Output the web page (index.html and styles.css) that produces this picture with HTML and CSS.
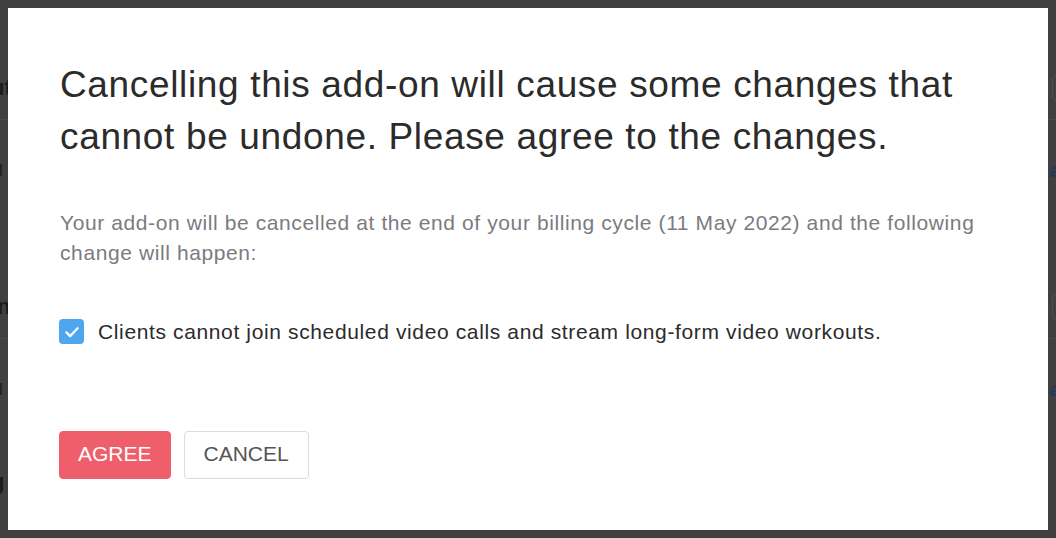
FILE: index.html
```html
<!DOCTYPE html>
<html lang="en">

<head>
  <meta charset="UTF-8">
  <meta name="viewport" content="width=device-width, initial-scale=1.0">
  <title>Cancel add-on</title>
  <link rel="stylesheet" href="styles.css">
</head>

<body>
  <!-- Page behind the modal (only the edges show) -->
  <div class="page">
    <div class="section section-top">
      <div class="section-head">
        <span class="title">ut</span>
        <span class="btn-ghost"></span>
      </div>
    </div>
    <div class="section">
      <div class="section-row">
        <span class="label">l</span>
        <span class="link">a</span>
      </div>
      <div class="section-head">
        <span class="title">in</span>
        <span class="btn-ghost"></span>
      </div>
    </div>
    <div class="section section-last">
      <div class="section-row">
        <span class="label">l</span>
        <span class="link">a</span>
      </div>
      <div class="section-head">
        <span class="title">g</span>
      </div>
    </div>
  </div>

  <!-- Modal -->
  <div class="modal">
    <h1 class="modal-title">Cancelling this add-on will cause some changes that cannot be undone. Please agree to the changes.</h1>
    <p class="modal-text">Your add-on will be cancelled at the end of your billing cycle (11 May 2022) and the following change will happen:</p>

    <label class="check">
      <span class="check-box">
        <svg viewBox="0 0 24 24" width="18" height="18">
          <path d="M4.5 12.5l5 5L19.5 7" fill="none" stroke="#fff" stroke-width="3" stroke-linecap="round" stroke-linejoin="round" />
        </svg>
      </span>
      <span class="check-label">Clients cannot join scheduled video calls and stream long-form video workouts.</span>
    </label>

    <div class="actions">
      <button class="btn btn-agree">AGREE</button>
      <button class="btn btn-cancel">CANCEL</button>
    </div>
  </div>
</body>

</html>
```

FILE: styles.css
```css
body {
  margin: 0;
  height: 538px;
  overflow: hidden;
  background: #404040;
  font-family: 'Liberation Sans', Arial, sans-serif;
}

.page {
  display: flex;
  flex-direction: column;
}

.section {
  display: flex;
  flex-direction: column;
  height: 219px;
  border-bottom: 1px solid #4b4b4b;
  box-sizing: border-box;
}

.section-top {
  height: 120px;
  justify-content: flex-end;
}

.section-last {
  border-bottom: 0;
}

.section-head {
  display: flex;
  justify-content: space-between;
  align-items: center;
  margin-top: auto;
  padding-bottom: 18px;
}

.section-last .section-head {
  margin-top: 68px;
}

.title {
  font-size: 22px;
  font-weight: bold;
  color: #1b1b1b;
  margin-left: -9px;
}

.btn-ghost {
  width: 40px;
  height: 22px;
  border: 1px solid #4e4e4e;
  border-radius: 3px;
  margin-right: -38px;
}

.section-row {
  display: flex;
  justify-content: space-between;
  align-items: center;
  padding-top: 40px;
}

.label {
  font-size: 17px;
  color: #1b1b1b;
  margin-left: -1px;
}

.link {
  font-size: 19px;
  font-weight: bold;
  color: #1d3a5b;
  margin-right: -4px;
}

/* Modal */
.modal {
  position: fixed;
  top: 8px;
  left: 8px;
  right: 8px;
  bottom: 8px;
  background: #fff;
  padding: 51px 52px 0;
  box-sizing: border-box;
}

.modal-title {
  margin: 0;
  font-size: 37px;
  font-weight: normal;
  line-height: 52px;
  letter-spacing: 0.65px;
  color: #2b2b2b;
}

.modal-text {
  margin: 45px 0 0;
  font-size: 21px;
  line-height: 30px;
  letter-spacing: 0.6px;
  color: #7b7b80;
}

.check {
  display: flex;
  align-items: center;
  gap: 14px;
  margin-top: 51px;
}

.check-box {
  display: flex;
  align-items: center;
  justify-content: center;
  width: 25px;
  height: 25px;
  margin-left: -1px;
  border-radius: 4px;
  background: #4da6ee;
}

.check-label {
  font-size: 21px;
  letter-spacing: 0.63px;
  color: #2b2b2b;
}

.actions {
  display: flex;
  gap: 13px;
  margin-top: 87px;
  margin-left: -1px;
}

.btn {
  height: 48px;
  padding: 0 18px 3px;
  border-radius: 4px;
  font-family: inherit;
  font-size: 21px;
}

.btn-agree {
  background: #ee5f6b;
  border: 1px solid #ee5f6b;
  color: #fff;
}

.btn-cancel {
  padding: 0 19px 3px;
  background: #fff;
  border: 1px solid #d9dce1;
  color: #555;
}
```
